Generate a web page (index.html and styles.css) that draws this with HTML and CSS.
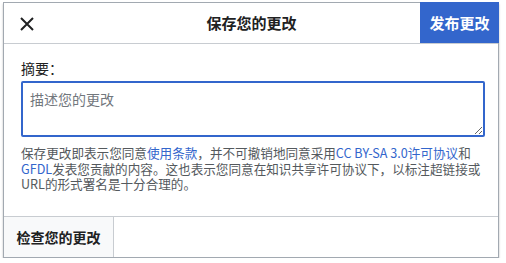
FILE: index.html
```html
<!DOCTYPE html>
<html lang="zh-CN">
<head>
  <meta charset="UTF-8">
  <title>保存您的更改</title>
  <link rel="stylesheet" href="styles.css">
</head>
<body>
  <div class="dialog">
    <!-- 顶栏 -->
    <div class="dialog-head">
      <button class="close-btn" aria-label="关闭">
        <svg width="14" height="14" viewBox="0 0 14 14">
          <path d="M1 1 L13 13 M13 1 L1 13" stroke="#202122" stroke-width="2" fill="none"/>
        </svg>
      </button>
      <h2 class="dialog-title">保存您的更改</h2>
      <button class="publish-btn">发布更改</button>
    </div>

    <!-- 摘要 -->
    <div class="dialog-body">
      <label class="summary-label" for="summary">摘要：</label>
      <textarea class="summary-input" id="summary" placeholder="描述您的更改"></textarea>
      <p class="license">保存更改即表示您同意<a href="#">使用条款</a>，并不可撤销地同意采用<a href="#">CC BY-SA 3.0许可协议</a>和<a href="#">GFDL</a>发表您贡献的内容。这也表示您同意在知识共享许可协议下，以标注超链接或URL的形式署名是十分合理的。</p>
    </div>

    <!-- 底栏 -->
    <div class="dialog-foot">
      <button class="review-btn">检查您的更改</button>
    </div>
  </div>
</body>
</html>
```

FILE: styles.css
```css
* {
  margin: 0;
  padding: 0;
  box-sizing: border-box;
}

body {
  font-family: 'Noto Sans CJK SC', 'Noto Sans', sans-serif;
  background-color: #fff;
  color: #202122;
  padding: 2px 0 0 3px;
}

.dialog {
  width: 496px;
  height: 256px;
  border: 1px solid #a2a9b1;
  background-color: #fff;
  box-shadow: 0 2px 2px rgba(0, 0, 0, 0.25);
  display: flex;
  flex-direction: column;
}

/* 顶栏 */
.dialog-head {
  display: flex;
  align-items: stretch;
  height: 41px;
  border-bottom: 1px solid #c8ccd1;
}

.close-btn {
  width: 46px;
  border: none;
  background: none;
  display: flex;
  align-items: center;
  justify-content: center;
  cursor: pointer;
  padding-top: 1px;
}

.dialog-title {
  flex: 1;
  text-align: center;
  font-size: 15px;
  font-weight: bold;
  line-height: 40px;
  padding-left: 33px;
}

.publish-btn {
  width: 79px;
  margin-top: -1px;
  margin-right: -1px;
  border: none;
  background-color: #36c;
  color: #fff;
  font-family: inherit;
  font-size: 15px;
  font-weight: bold;
  cursor: pointer;
}

/* 摘要 */
.dialog-body {
  flex: 1;
  padding: 14px 13px 0 17px;
}

.summary-label {
  display: block;
  font-size: 14px;
  line-height: 20px;
}

.summary-input {
  display: block;
  width: 100%;
  height: 56px;
  margin-top: 3px;
  padding: 6px 7px;
  border: 2px solid #36c;
  border-radius: 2px;
  font-family: inherit;
  font-size: 14px;
  line-height: 20px;
  color: #202122;
  resize: vertical;
}

.summary-input::placeholder {
  color: #72777d;
}

.license {
  margin-top: 8px;
  font-size: 12.6px;
  line-height: 15.5px;
  color: #54595d;
}

.license a {
  color: #36c;
  text-decoration: none;
}

/* 底栏 */
.dialog-foot {
  height: 41px;
  border-top: 1px solid #c8ccd1;
  display: flex;
}

.review-btn {
  width: 110px;
  border: none;
  border-right: 1px solid #c8ccd1;
  background-color: #f8f9fa;
  color: #202122;
  font-family: inherit;
  font-size: 14px;
  font-weight: bold;
  cursor: pointer;
}
```
